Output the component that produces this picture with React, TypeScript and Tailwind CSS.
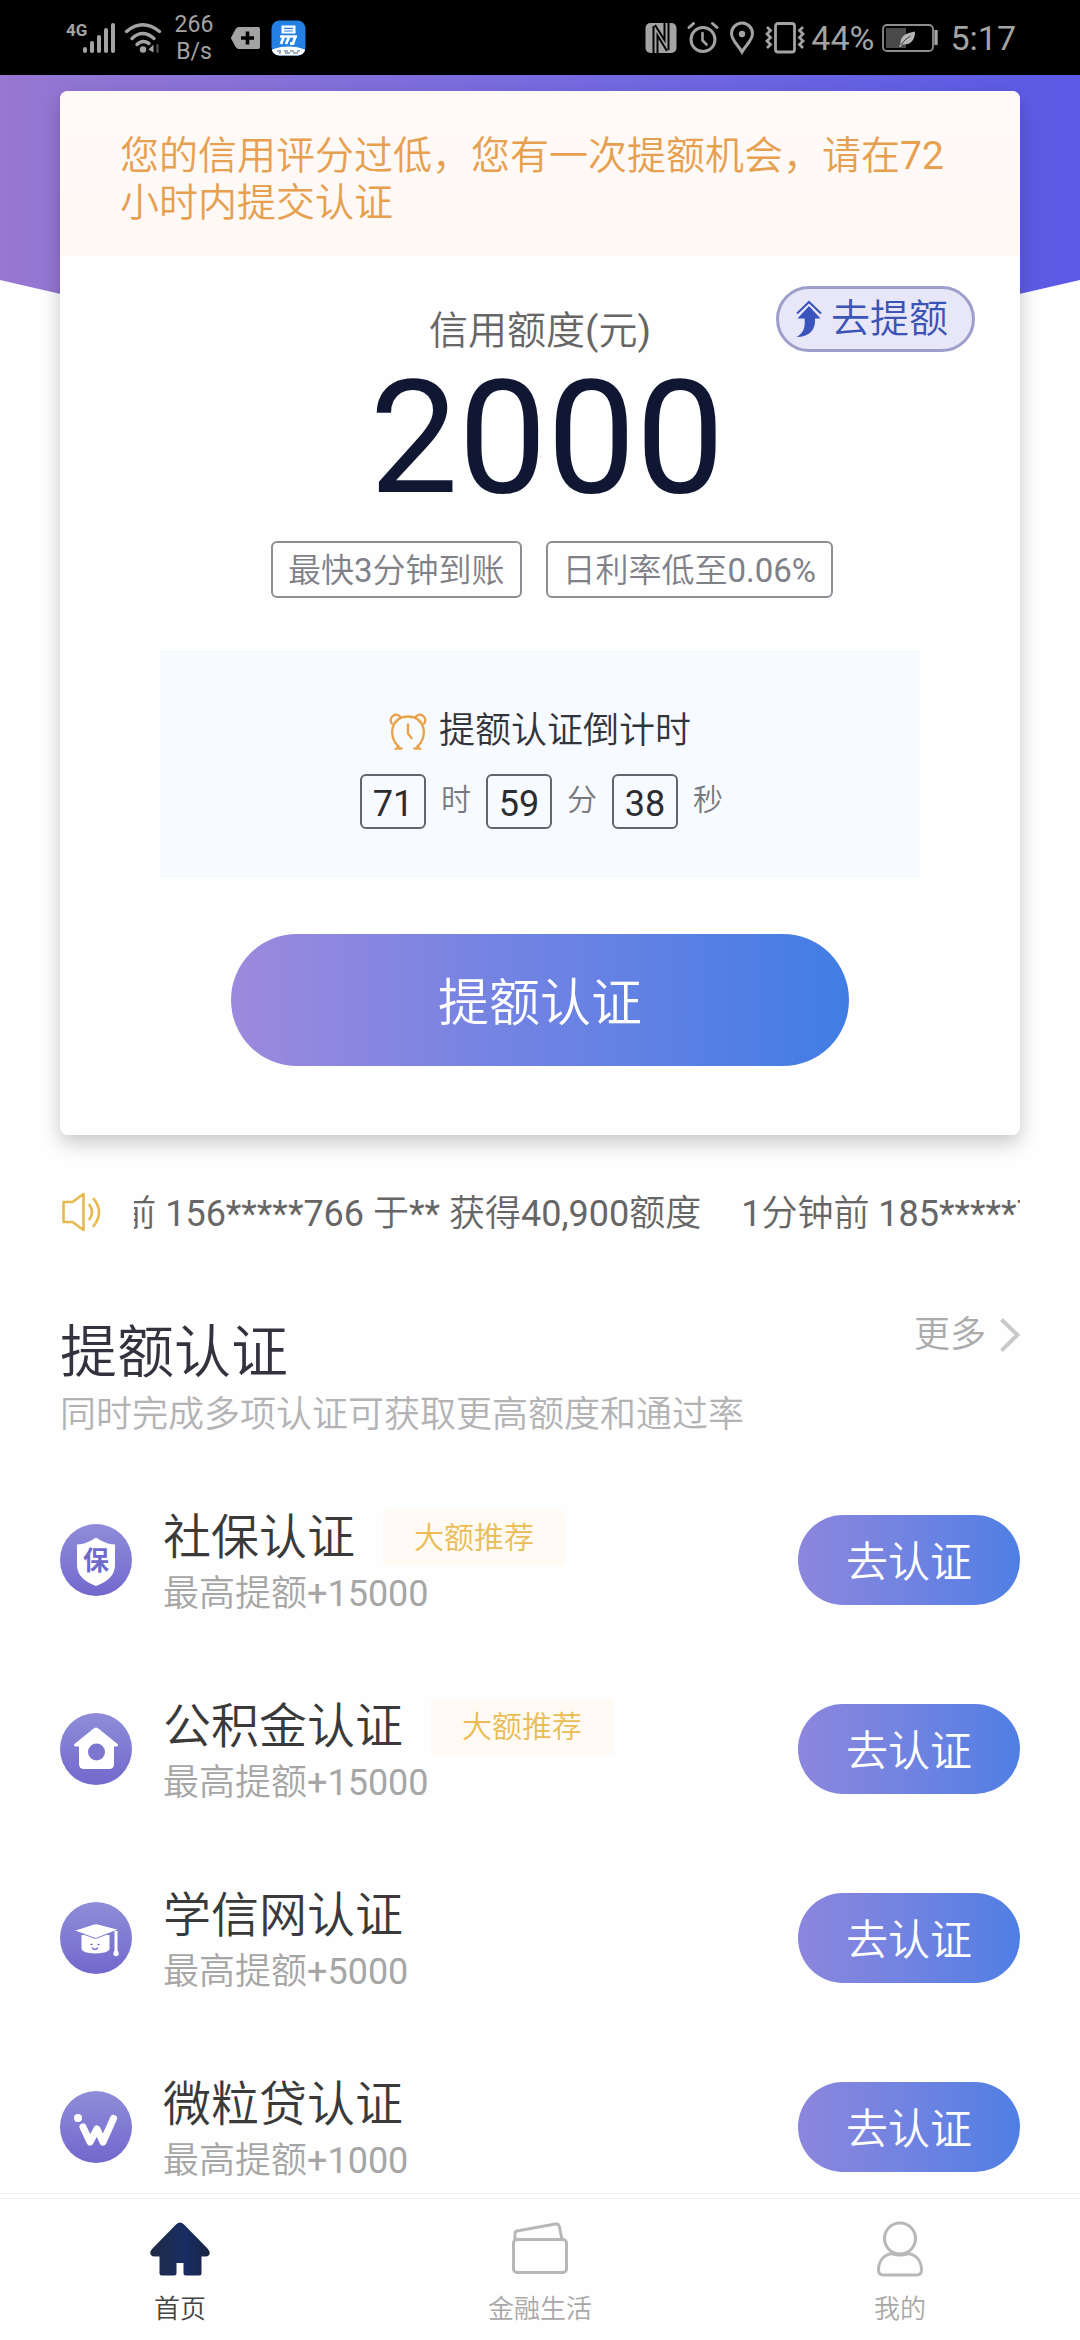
import React from 'react';

function SignalIcon() {
  return (
    <svg width="52" height="34" viewBox="0 0 52 34" fill="#a3a3a3" aria-hidden="true">
      <text x="0" y="15" fontSize="17" fontWeight="700" fontFamily="Roboto, sans-serif">
        4G
      </text>
      <rect x="17" y="26" width="4" height="6" rx="2" />
      <rect x="24" y="20" width="4" height="12" rx="2" />
      <rect x="31" y="14" width="4" height="18" rx="2" />
      <rect x="38" y="7" width="4" height="25" rx="2" />
      <rect x="45" y="2" width="4" height="30" rx="2" />
    </svg>
  );
}

function WifiIcon() {
  return (
    <svg width="38" height="34" viewBox="0 0 38 34" fill="none" stroke="#a3a3a3" strokeWidth="3.4" strokeLinecap="round" aria-hidden="true">
      <path d="M2.500 10.500Q18.500-3 35.500 10.500" />
      <path d="M8 17.500Q18.500 7.500 30 17.500" />
      <path d="M13 23.500Q18.500 18 25 22.500" />
      <circle cx="19" cy="28.500" r="3.200" fill="#a3a3a3" stroke="none" />
      <path d="M24.500 28.500l5-5v8z" fill="#a3a3a3" stroke="none" />
      <path d="M33.500 24v7" stroke="#555" strokeWidth="2" />
    </svg>
  );
}

function TagPlusIcon() {
  return (
    <svg width="31" height="24" viewBox="0 0 31 24" aria-hidden="true">
      <path d="M8 1h20a2 2 0 0 1 2 2v18a2 2 0 0 1-2 2H8Q5.500 22 4 18L.8 12 4 6Q5.500 2 8 1z" fill="#a3a3a3" />
      <path d="M17.500 5.500v13M11 12h13" stroke="#000" strokeWidth="3.600" />
    </svg>
  );
}

function AppBadge() {
  return (
    <svg width="35" height="36" viewBox="0 0 35 36" aria-hidden="true">
      <defs>
        <clipPath id="appClip">
          <rect x="0.5" y="0.5" width="34" height="35" rx="8" />
        </clipPath>
      </defs>
      <g clipPath="url(#appClip)">
        <rect width="35" height="36" fill="#2580e3" />
        <ellipse cx="17.500" cy="34" rx="20" ry="7.500" fill="#fff" />
      </g>
      <rect x="10.500" y="5.500" width="14" height="8" fill="#fff" />
      <path d="M13 8.300h9M13 11h9" stroke="#2580e3" strokeWidth="1.200" />
      <path d="M9 16.500h17" stroke="#fff" strokeWidth="2.400" />
      <path d="M13 16l-3 8M18 17l-3 7M24.500 16l-2.500 7.500h-3" stroke="#fff" strokeWidth="2.800" fill="none" />
      <path d="M6 31h4M13 31h4M19 31h4M26 31h3M8 33h2M14 33h5M22 33h5" stroke="#3c5f8c" strokeWidth="1.200" />
    </svg>
  );
}

function NfcIcon() {
  return (
    <svg width="32" height="32" viewBox="0 0 32 32" aria-hidden="true">
      <rect x="0.500" y="1" width="31" height="30" rx="5" fill="#a3a3a3" />
      <path d="M8.500 4v27M23.500 1v27" stroke="#000" strokeWidth="2" />
      <path d="M12.500 31V13.500L22 29" stroke="#000" strokeWidth="2" fill="none" />
      <path d="M19.500 1v17L10 3" stroke="#000" strokeWidth="2" fill="none" />
    </svg>
  );
}

function AlarmStatusIcon() {
  return (
    <svg width="32" height="34" viewBox="0 0 32 34" fill="none" stroke="#a3a3a3" strokeWidth="3" strokeLinecap="round" aria-hidden="true">
      <circle cx="16" cy="18.500" r="12" />
      <path d="M2 6.500L6.500 2.500M30 6.500l-4.500-4" />
      <path d="M15.500 12v7.500l4 4" strokeWidth="2.600" />
    </svg>
  );
}

function PinIcon() {
  return (
    <svg width="26" height="34" viewBox="0 0 26 34" fill="none" stroke="#a3a3a3" strokeWidth="3" aria-hidden="true">
      <path d="M13 31C9.500 24.500 2.500 19.500 2.500 12.500a10.500 10.500 0 0 1 21 0C23.500 19.500 16.500 24.500 13 31z" />
      <circle cx="13" cy="13" r="3.200" fill="#a3a3a3" stroke="none" />
    </svg>
  );
}

function VibrateIcon() {
  return (
    <svg width="40" height="34" viewBox="0 0 40 34" fill="none" stroke="#a3a3a3" strokeWidth="2.800" aria-hidden="true">
      <rect x="10.500" y="2.500" width="19" height="28.500" rx="2.500" />
      <path d="M2 6l3.500 3.500L2 13l3.500 3.500L2 20l3.500 3.500L2 27" />
      <path d="M38 6l-3.500 3.500L38 13l-3.500 3.500L38 20l-3.500 3.500L38 27" />
    </svg>
  );
}

function BatteryIcon() {
  return (
    <svg width="58" height="28" viewBox="0 0 58 28" aria-hidden="true">
      <rect x="1" y="1" width="50" height="26" rx="4" fill="none" stroke="#8e8e8e" strokeWidth="1.800" />
      <rect x="4" y="4" width="20" height="20" fill="#4a4a4a" />
      <path d="M54 6v15" stroke="#a3a3a3" strokeWidth="3.400" />
      <path d="M33 7.500C24 9 18 12 18.500 20l-1.500 2.500 1.500.5 2-2.500C29 21 33 16 33 7.500z" fill="#b5b5b5" />
      <path d="M19 21q3.500-6 9.500-9" stroke="#444" strokeWidth="1" fill="none" />
    </svg>
  );
}

function RaiseArrowIcon() {
  return (
    <svg width="28" height="38" viewBox="0 0 28 38" aria-hidden="true">
      <path d="M2 13.500L14 2l12 11.500" fill="none" stroke="#3b54bd" strokeWidth="2" />
      <path d="M14 6L25.500 18.500H20C21 29 15 37 1.500 37 8.500 33.500 10.500 27 9.500 18.500H2.500z" fill="#3b54bd" />
    </svg>
  );
}

function AlarmClockIcon() {
  return (
    <svg width="38" height="38" viewBox="0 0 38 38" fill="none" stroke="#e8a44c" strokeWidth="2.400" strokeLinecap="round" aria-hidden="true">
      <path d="M9.500 34.500C-1 26 1 4.500 19 4.500S39 26 28.500 34.500" />
      <path d="M2.800 11.500A5.200 5.200 0 1 1 11.500 5M26.500 5a5.200 5.200 0 1 1 8.700 6.500" />
      <path d="M9.500 34.500L7.500 36.500h5M28.500 34.500l2 2h-5M19 12.500v9l3.500 4.500" />
    </svg>
  );
}

function SpeakerIcon() {
  return (
    <svg width="42" height="42" viewBox="0 0 42 42" fill="none" stroke="#e8b951" strokeWidth="2.600" strokeLinejoin="round" aria-hidden="true">
      <path d="M3.500 11h9L23.500 3v36l-11-8h-9z" />
      <path d="M29 13q6 8 0 16M33 7q12 14 0 29" />
    </svg>
  );
}

function IconDisc({ children }: { children: React.ReactNode }) {
  return (
    <span className="flex size-18 shrink-0 items-center justify-center rounded-full bg-linear-to-b from-[#8f8dd8] to-[#7268cd]">
      {children}
    </span>
  );
}

function ShieldIcon() {
  return (
    <svg width="72" height="72" viewBox="0 0 72 72" aria-hidden="true">
      <path d="M36 13.500q9 6.500 19 7V41q0 14-19 21Q17 55 17 41V20.500q10-.5 19-7z" fill="#fff" />
      <text x="36" y="46" textAnchor="middle" fontSize="26" fontWeight="700" fill="#6f6acb" fontFamily="'Noto Sans CJK SC', sans-serif">
        保
      </text>
    </svg>
  );
}

function FundHouseIcon() {
  return (
    <svg width="72" height="72" viewBox="0 0 72 72" aria-hidden="true">
      <path d="M33 16q3-3 6 0l18.500 15q1.500 2-1.500 2.500h-2V51q0 5-5 5H24q-5 0-5-5V33.500h-3q-3-.5-1.500-2.500z" fill="#fff" />
      <circle cx="36.500" cy="39" r="8.500" fill="#7b76d0" />
    </svg>
  );
}

function CapIcon() {
  return (
    <svg width="72" height="72" viewBox="0 0 72 72" aria-hidden="true">
      <path d="M21.500 33h28v14q-1 4-14 4.500-13-.5-14-4.500z" fill="#fff" />
      <path d="M14 28.500l20-6.500q2-.5 4 0l21 5.500-22 8.500q-1.500.5-3 0z" fill="#fff" stroke="#7f7bd3" strokeWidth="1" />
      <path d="M56 29v19" stroke="#fff" strokeWidth="3" />
      <path d="M56 46q3.500 4.500 2.500 7-2.500 2.500-5 0-.5-3 2.500-7z" fill="#fff" />
      <path d="M31 42.500h1M38 42.500h1M32.500 46q2.500 3 5 0" fill="none" stroke="#6f6acb" strokeWidth="1.400" strokeLinecap="round" />
    </svg>
  );
}

function WeiIcon() {
  return (
    <svg width="72" height="72" viewBox="0 0 72 72" aria-hidden="true">
      <circle cx="18" cy="27" r="4" fill="#fff" />
      <path d="M23 36l7 15 7-13 6 13 10.500-23.500" fill="none" stroke="#fff" strokeWidth="7" strokeLinecap="round" strokeLinejoin="round" />
    </svg>
  );
}

function HomeTabIcon() {
  return (
    <svg width="62" height="56" viewBox="0 0 62 56" aria-hidden="true">
      <defs>
        <linearGradient id="homeFill" x1="0" y1="0" x2="1" y2="0">
          <stop offset="0" stopColor="#1e2a45" />
          <stop offset="0.600" stopColor="#182d63" />
          <stop offset="1" stopColor="#19243f" />
        </linearGradient>
      </defs>
      <path
        d="M27 3.500q4-4 8 0l23.500 24q3.500 4 1.500 6.500-1 1.500-4 1.500h-3.500V52q0 2.500-2.500 2.500H37q-2.500 0-2.500-2.500V42h-7v10q0 2.500-2.500 2.500H13q-2.500 0-2.500-2.500V35.500H6q-3 0-4-1.500-2-3 1.500-6.500z"
        fill="url(#homeFill)"
      />
    </svg>
  );
}

function WalletTabIcon() {
  return (
    <svg width="58" height="56" viewBox="0 0 58 56" fill="none" stroke="#b8b8b8" strokeWidth="3" aria-hidden="true">
      <rect x="2.500" y="18.500" width="53" height="33" rx="3.500" />
      <path d="M4 18.500v-6q0-2 2-2.600L44.500 3q3-.5 3.800 2.400L51 18.500" />
    </svg>
  );
}

function PersonTabIcon() {
  return (
    <svg width="58" height="56" viewBox="0 0 58 56" fill="none" stroke="#b8b8b8" strokeWidth="3" aria-hidden="true">
      <ellipse cx="29" cy="17.500" rx="15.500" ry="15.500" />
      <path d="M20.500 32.500C11 34.500 7.500 42 7.500 49q0 5 5 5h33q5 0 5-5c0-7-3.500-14.500-13-16.500q-4 1.500-8.500 1.500t-8.500-1.500z" />
    </svg>
  );
}

const items = [
  { title: '社保认证', amount: '最高提额+15000', hot: true, icon: <ShieldIcon /> },
  { title: '公积金认证', amount: '最高提额+15000', hot: true, icon: <FundHouseIcon /> },
  { title: '学信网认证', amount: '最高提额+5000', hot: false, icon: <CapIcon /> },
  { title: '微粒贷认证', amount: '最高提额+1000', hot: false, icon: <WeiIcon /> },
];

const countdown = [
  { value: '71', unit: '时' },
  { value: '59', unit: '分' },
  { value: '38', unit: '秒' },
];

const tabs = [
  { label: '首页', icon: <HomeTabIcon />, active: true },
  { label: '金融生活', icon: <WalletTabIcon />, active: false },
  { label: '我的', icon: <PersonTabIcon />, active: false },
];

function StatusBar() {
  return (
    <header className="flex h-[75px] items-center justify-between bg-black pr-16 pl-[66px] text-[#a3a3a3]">
      <div className="flex items-center">
        <SignalIcon />
        <span className="ml-1.5">
          <WifiIcon />
        </span>
        <span className="ml-3 w-10 text-center text-[23px] leading-[27px]">
          266
          <br />
          B/s
        </span>
        <span className="ml-4">
          <TagPlusIcon />
        </span>
        <span className="ml-2.5">
          <AppBadge />
        </span>
      </div>
      <div className="flex items-center text-[34px] leading-10">
        <NfcIcon />
        <span className="ml-2.5">
          <AlarmStatusIcon />
        </span>
        <span className="ml-2.5">
          <PinIcon />
        </span>
        <span className="ml-2.5">
          <VibrateIcon />
        </span>
        <span className="ml-1.5">44%</span>
        <span className="ml-2">
          <BatteryIcon />
        </span>
        <span className="ml-2.5">5:17</span>
      </div>
    </header>
  );
}

function CreditCard() {
  return (
    <section className="relative mx-15 rounded-lg bg-[#fefefe] pb-[69px] shadow-[0_8px_20px_rgba(0,0,0,0.22)]">
      <p className="rounded-t-lg bg-linear-to-b from-[#fffaf7] to-[#fff9f6] px-15 pt-[42px] pb-[29px] text-[39px] leading-[47px] text-[#e6a050]">
        您的信用评分过低，您有一次提额机会，请在72小时内提交认证
      </p>
      <button
        type="button"
        className="absolute top-[195px] right-[45px] flex h-[66px] items-center gap-2 rounded-full border-3 border-[#9c9fcb] bg-[#e7e7f8] pr-6 pl-4 text-[39px] leading-none text-[#3b54b5]"
      >
        <RaiseArrowIcon />
        去提额
      </button>
      <div className="mx-auto mt-[51px] w-fit text-[39px] leading-12 text-[#666]">信用额度(元)</div>
      <div className="mt-1 pl-3.5 text-center text-[158px] leading-[158px] text-[#101733]">2000</div>
      <div className="mt-6 flex justify-center text-[33px] leading-[51px] text-[#7f8088]">
        <span className="ml-6 rounded-md border-2 border-[#8d8e94] px-[15px] pt-0.5">最快3分钟到账</span>
        <span className="ml-6 rounded-md border-2 border-[#8d8e94] px-[15px] pt-0.5">日利率低至0.06%</span>
      </div>
      <div className="mx-25 mt-[52px] bg-[#f7fafe] pt-[57px] pb-[49px]">
        <h2 className="flex items-center justify-center gap-3 text-[36px] leading-12 text-[#33343a]">
          <AlarmClockIcon />
          提额认证倒计时
        </h2>
        <div className="mt-[19px] flex justify-center pl-4.5">
          {countdown.map((c) => (
            <div key={c.unit} className="flex items-center">
              <span className="flex h-[55px] w-[66px] items-center justify-center rounded-md border-2 border-[#63656a] pt-1 text-[36px] leading-none text-[#2b2c30]">
                {c.value}
              </span>
              <span className="w-15 pb-1 text-center text-[30px] leading-9 text-[#77797e]">{c.unit}</span>
            </div>
          ))}
        </div>
      </div>
      <button
        type="button"
        className="mx-auto mt-14 block h-[132px] w-[618px] max-w-full rounded-full bg-linear-to-r from-[#9c89dd] via-[#7283e3] via-45% to-[#3f7de5] pt-1.5 text-[51px] leading-none text-white"
      >
        提额认证
      </button>
    </section>
  );
}

function Ticker() {
  return (
    <div className="mx-15 mt-[53px] flex h-12 items-center text-[36px] leading-12 text-[#666]">
      <SpeakerIcon />
      <div className="ml-8 flex min-w-0 flex-1 overflow-hidden pt-1 whitespace-nowrap">
        <span className="-ml-[106px] shrink-0">1分钟前 156*****766 于** 获得40,900额度</span>
        <span className="ml-10 shrink-0">1分钟前 185*****7</span>
      </div>
    </div>
  );
}

function CertList() {
  return (
    <section className="mx-15 mt-[85px]">
      <div className="flex items-start justify-between">
        <h1 className="text-[57px] leading-16 text-[#33333f]">提额认证</h1>
        <a href="#more" className="-mt-2.5 flex items-center gap-3 text-[36px] leading-12 text-[#ababab]">
          更多
          <svg width="22" height="36" viewBox="0 0 22 36" fill="none" stroke="#c9c9c9" strokeWidth="4" aria-hidden="true">
            <path d="M3.500 2.500L19.500 18 3.500 33.500" />
          </svg>
        </a>
      </div>
      <p className="mt-1.5 text-[36px] leading-12 text-[#b3b3b5]">同时完成多项认证可获取更高额度和通过率</p>
      <ul className="mt-[63px] flex flex-col gap-[73px]">
        {items.map((it) => (
          <li key={it.title} className="flex items-center">
            <IconDisc>{it.icon}</IconDisc>
            <div className="ml-[31px] flex-1 pt-2">
              <div className="flex h-14 items-center">
                <h3 className="text-[48px] leading-14 text-[#3a3a3a]">{it.title}</h3>
                {it.hot && (
                  <span className="ml-7 rounded-sm bg-[#fffbf4] px-[31px] text-[30px] leading-14 text-[#ebbc55]">大额推荐</span>
                )}
              </div>
              <p className="mt-1 text-[36px] leading-12 text-[#a6a6a6]">{it.amount}</p>
            </div>
            <button
              type="button"
              className="h-[90px] w-[222px] rounded-full bg-linear-to-r from-[#8c86dd] to-[#4f7fe4] pt-1.5 text-[42px] leading-none text-white"
            >
              去认证
            </button>
          </li>
        ))}
      </ul>
    </section>
  );
}

function TabBar() {
  return (
    <nav className="mt-auto border-t border-[#eef2f3] bg-[#fefefe] pt-1">
      <div className="grid h-[142px] grid-cols-3 border-t border-[#eef2f3]">
        {tabs.map((t) => (
          <a key={t.label} href={'#' + t.label} className="flex flex-col items-center pt-[22px]">
            {t.icon}
            <span className={t.active ? 'mt-4 text-[26px] leading-8 text-[#444]' : 'mt-4 text-[26px] leading-8 text-[#a8a8a8]'}>{t.label}</span>
          </a>
        ))}
      </div>
    </nav>
  );
}

export default function App() {
  return (
    <div className="flex min-h-screen flex-col bg-[#fefefe] font-['Roboto','Noto_Sans_CJK_SC_DemiLight','Noto_Sans_CJK_SC',sans-serif]">
      <StatusBar />
      <main className="relative isolate pt-4">
        <div className="absolute inset-x-0 top-0 -z-10 h-[300px] bg-linear-to-r from-[#9677d2] via-[#776be0] to-[#5b5ae6] [clip-path:polygon(0_0,100%_0,100%_205px,94%_220px,6%_220px,0_205px)]" />
        <CreditCard />
        <Ticker />
        <CertList />
      </main>
      <TabBar />
    </div>
  );
}
